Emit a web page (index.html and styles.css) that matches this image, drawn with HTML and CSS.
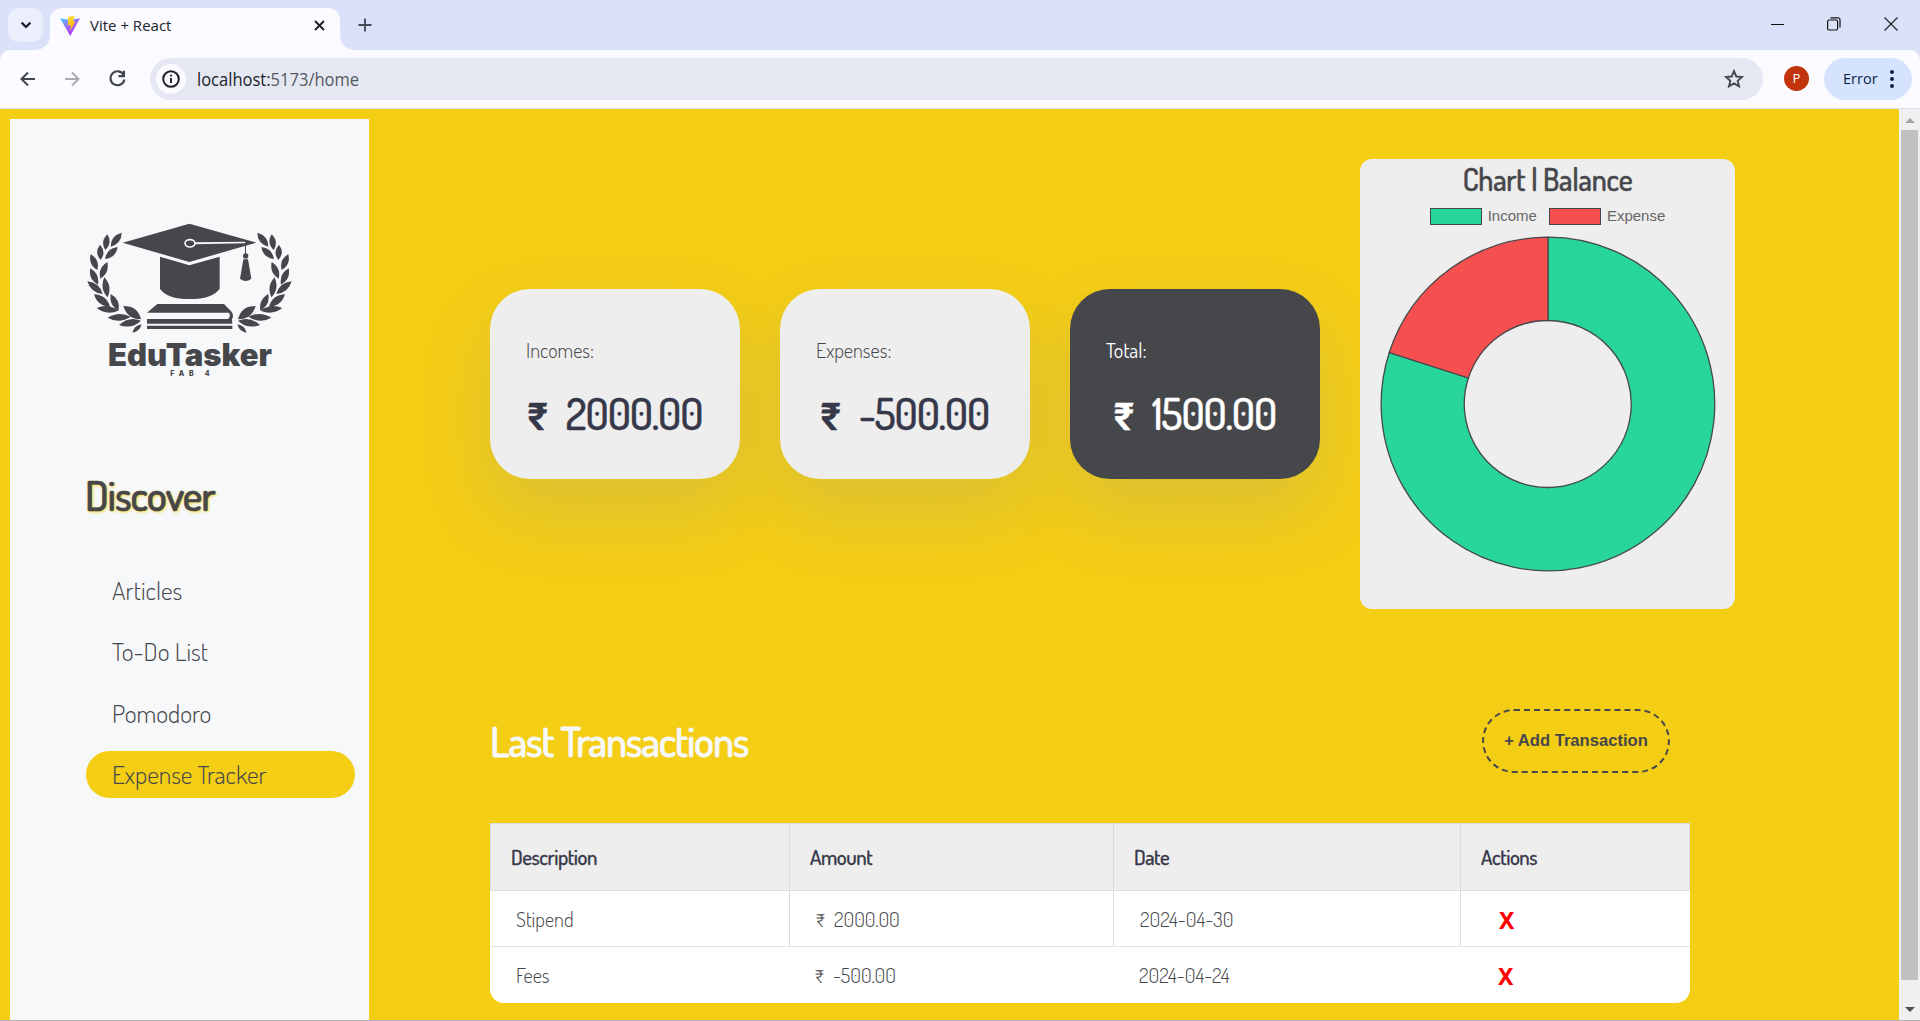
FILE: index.html
```html
<!DOCTYPE html>
<html lang="en">
<head>
<meta charset="utf-8">
<title>Vite + React</title>
<link rel="stylesheet" href="styles.css">
</head>
<body>
<div class="window">
  <header class="tabstrip">
    <div class="tab-search"><svg width="14" height="14" viewBox="0 0 14 14"><path d="M2.6 4.6 7 9l4.400-4.400" fill="none" stroke="#1b1f26" stroke-width="2.200"/></svg></div>
    <div class="tab">
      <svg class="vite" width="20" height="20" viewBox="0 0 20 20">
        <defs>
          <linearGradient id="vg" x1="0" y1="0" x2=".6" y2="1"><stop offset="0" stop-color="#41d1ff"/><stop offset=".5" stop-color="#9a6bf5"/><stop offset="1" stop-color="#bd34fe"/></linearGradient>
          <linearGradient id="vy" x1="0" y1="0" x2="0" y2="1"><stop offset="0" stop-color="#ffdd35"/><stop offset="1" stop-color="#ffa800"/></linearGradient>
        </defs>
        <path d="M0 2.200 10 4l10-1.800L10.300 20z" fill="url(#vg)"/><path d="M8.200.8 14.600 0l-1.500 5.200h2.300L10.500 14.800l.2-5.500H7.900z" fill="url(#vy)"/>
      </svg>
      <span class="tab-title">Vite + React</span>
      <svg class="tab-close" width="11" height="11" viewBox="0 0 11 11"><path d="M1 1l9 9M10 1l-9 9" stroke="#1b1f26" stroke-width="1.900"/></svg>
    </div>
    <svg class="plus" width="14" height="14" viewBox="0 0 14 14"><path d="M7 .5v13M.5 7h13" stroke="#454c58" stroke-width="1.900"/></svg>
    <div class="controls">
      <svg width="14" height="14" viewBox="0 0 14 14"><path d="M1 7.500h13" stroke="#111"/></svg>
      <svg width="14" height="14" viewBox="0 0 14 14" fill="none" stroke="#111" stroke-width="1.200"><rect x=".6" y="3" width="10" height="10" rx="1.500"/><path d="M3.500.8h7.500a2 2 0 0 1 2 2V10.500"/></svg>
      <svg width="14" height="14" viewBox="0 0 14 14"><path d="M.5.5l13 13M13.500.5l-13 13" stroke="#222" stroke-width="1.200"/></svg>
    </div>
  </header>
  <div class="toolbar">
    <svg class="nav-icon" width="16" height="16" viewBox="0 0 16 16" fill="none" stroke="#3f4652" stroke-width="2"><path d="M15 8H2M8 1.500 1.500 8 8 14.500"/></svg>
    <svg class="nav-icon" width="16" height="16" viewBox="0 0 16 16" fill="none" stroke="#a9abb1" stroke-width="2"><path d="M1 8h13M8 1.500 14.500 8 8 14.500"/></svg>
    <svg class="nav-icon" width="17" height="17" viewBox="0 0 17 17"><path d="M14.800 5.200A7 7 0 1 0 15.400 9.500" fill="none" stroke="#3f4652" stroke-width="2.100"/><path d="M16 .8v6.400H9.400V5.100h4.400V.8z" fill="#3f4652"/></svg>
    <div class="address">
      <span class="info"><svg width="18" height="18" viewBox="0 0 18 18"><circle cx="9" cy="9" r="7.800" fill="none" stroke="#1b1f26" stroke-width="2"/><path d="M9 8v5M9 4.800v1.800" stroke="#1b1f26" stroke-width="1.900"/></svg></span>
      <span class="url">localhost:<span class="path">5173/home</span></span>
      <svg class="star" width="20" height="20" viewBox="0 0 20 20"><path d="M10 2.200l2.300 5.300 5.800.5-4.400 3.800 1.300 5.600-5-3-5 3 1.300-5.600L1.900 8l5.800-.5z" fill="none" stroke="#43474e" stroke-width="1.900"/></svg>
    </div>
    <div class="avatar">P</div>
    <div class="error"><span>Error</span><svg width="4" height="18" viewBox="0 0 4 18" fill="#0a2342"><circle cx="2" cy="2" r="2"/><circle cx="2" cy="9" r="2"/><circle cx="2" cy="16" r="2"/></svg></div>
  </div>
  <div class="viewport">
    <div class="page">
      <aside class="sidebar">
        <svg class="logo" width="240" height="200" viewBox="0 0 720 600" fill="#46474b">
          <defs><g id="laurel">
            <path d="M155 98Q155 130 122 140Q122 107 155 98zM112 103Q128 128 106 150Q90 125 112 103zM143 141Q138 173 105 177Q110 145 143 141zM90 134Q110 156 92 180Q72 158 90 134zM62 163Q90 178 82 210Q54 194 62 163zM112 186Q119 219 91 236Q83 203 112 186zM61 205Q90 222 84 254Q54 238 61 205zM103 232Q128 258 113 292Q88 266 103 232z"/>
            <path d="M52 244Q88 247 98 282Q62 279 52 244zM72 283Q109 284 120 320Q83 319 72 283zM122 282Q152 298 146 332Q116 316 122 282zM80 324Q115 309 145 332Q110 347 80 324zM113 353Q147 332 182 350Q147 373 113 353zM160 318Q204 318 213 358Q172 358 160 318zM147 375Q177 347 213 362Q185 389 147 375zM187 398Q193 376 215 373Q209 395 187 398z"/>
          </g></defs>
          <use href="#laurel"/><use href="#laurel" transform="translate(717 0) scale(-1 1)"/>
          <path d="M158 128 358 71 559 128 358 186z"/>
          <path d="M270 170 358 196 449 170V266Q428 297 359 297T270 266z"/>
          <ellipse cx="360" cy="130" rx="15" ry="11" fill="none" stroke="#f6f8fa" stroke-width="5"/>
          <path d="M375 127 526 125.500V129.500L375 133z" fill="#f6f8fa"/>
          <path d="M525 128h3v36h-3z"/><circle cx="527" cy="168" r="8"/><path d="M520 178h14l10 58q-17 14-34 0z"/>
          <path d="M262 312H462L482 332Q494 345 486 358L487 371H231V357H474Q484 348 477 338H231zM231 377H487V387H231z"/>
          <text class="logo-name" x="114" y="497" textLength="492" lengthAdjust="spacingAndGlyphs">EduTasker</text>
          <text class="logo-sub" x="301" y="528" textLength="118">FAB 4</text>
        </svg>
        <h1 class="discover">Discover</h1>
        <nav class="menu">
          <a class="menu-item">Articles</a>
          <a class="menu-item">To-Do List</a>
          <a class="menu-item">Pomodoro</a>
          <a class="menu-item active">Expense Tracker</a>
        </nav>
      </aside>
      <main class="main">
        <section class="summary">
          <article class="card"><p class="label">Incomes:</p><p class="amount"><span class="rupee">₹</span><span>2000.00</span></p></article>
          <article class="card"><p class="label">Expenses:</p><p class="amount"><span class="rupee">₹</span><span>-500.00</span></p></article>
          <article class="card dark"><p class="label">Total:</p><p class="amount"><span class="rupee">₹</span><span>1500.00</span></p></article>
          <article class="chart">
            <h2>Chart | Balance</h2>
            <div class="legend"><i class="swatch"></i><span>Income</span><i class="swatch red"></i><span>Expense</span></div>
            <svg class="donut" width="336" height="336" viewBox="-168 -168 336 336" stroke="#46474b" stroke-width="1.300">
              <path d="M0-166.800A166.800 166.800 0 1 1-158.700-51.500L-79.600-26A83.500 83.500 0 1 0 0-83.500z" fill="#28d59a"/>
              <path d="M-158.700-51.500A166.800 166.800 0 0 1 0-166.800V-83.500A83.500 83.500 0 0 0-79.600-26z" fill="#f64f4f"/>
            </svg>
          </article>
        </section>
        <section class="transactions">
          <div class="section-head"><h2>Last Transactions</h2><button class="add">+ Add Transaction</button></div>
          <div class="table">
            <div class="row head"><div>Description</div><div>Amount</div><div>Date</div><div>Actions</div></div>
            <div class="row lined"><div>Stipend</div><div><span class="rupee">₹</span><span>2000.00</span></div><div>2024-04-30</div><div><b>X</b></div></div>
            <div class="row"><div>Fees</div><div><span class="rupee">₹</span><span>-500.00</span></div><div>2024-04-24</div><div><b>X</b></div></div>
          </div>
        </section>
      </main>
    </div>
    <div class="scrollbar"><i class="arrow up"></i><i class="thumb"></i><i class="arrow down"></i></div>
  </div>
</div>
</body>
</html>
```
FILE: styles.css
```css
* { box-sizing: border-box; }
html, body { margin: 0; height: 100%; overflow: hidden; }
h1, h2, p { margin: 0; }
body { font-family: "Dosis", Roboto, "Liberation Sans", sans-serif; font-weight: 300; color: #46474b; }
svg { flex: none; display: block; }
.window { height: 1021px; display: flex; flex-direction: column; background: #dae1f9; border-bottom: 1px solid #b3b3b3; }

.tabstrip { height: 50px; flex: none; display: flex; padding: 8px 22px 0 8px; }
.tab-search { width: 35px; height: 34px; border-radius: 11px; background: #ebeffc; display: flex; align-items: center; justify-content: center; }
.tab { position: relative; width: 290px; height: 42px; margin-left: 7px; padding: 0 15px 7px 10px; background: #fafaff; border-radius: 12px 12px 0 0; display: flex; align-items: center; font: 400 15px "Open Sans", sans-serif; color: #202329; }
.tab::before, .tab::after { content: ""; position: absolute; bottom: 0; width: 14px; height: 14px; }
.tab::before { left: -14px; background: radial-gradient(circle at 0 0, transparent 13.5px, #fafaff 14px); }
.tab::after { right: -14px; background: radial-gradient(circle at 100% 0, transparent 13.5px, #fafaff 14px); }
.tab-title { margin: -2px 0 0 10px; }
.tab-close { margin-left: auto; }
.plus { margin: 10px 0 0 18px; }
.controls { margin: 9px 0 0 auto; display: flex; gap: 43px; }

.toolbar { height: 59px; flex: none; display: flex; align-items: center; padding: 1px 8px 2px 0; background: #fafaff; border-bottom: 1px solid #dfe1ea; border-radius: 10px 10px 0 0; }
.nav-icon { margin-left: 20px; }
.nav-icon + .nav-icon { margin-left: 28px; }
.nav-icon + .nav-icon + .nav-icon { margin-left: 29px; }
.address { width: 1613px; height: 42px; margin-left: 24px; padding: 0 19px 0 6px; border-radius: 21px; background: #e5e8f3; display: flex; align-items: center; }
.info { width: 30px; height: 30px; border-radius: 15px; background: #fafaff; display: flex; align-items: center; justify-content: center; }
.url { margin-left: 11px; font: 400 19px "Open Sans", sans-serif; color: #202329; transform: scaleX(.87); transform-origin: left; }
.path { color: #555860; }
.star { margin-left: auto; }
.avatar { width: 25px; height: 25px; margin-left: 21px; border-radius: 50%; background: #c2340c; color: #fff; font: 400 13px/25px "Open Sans", sans-serif; text-align: center; }
.error { width: 88px; height: 42px; margin-left: 15px; padding: 0 18px 0 19px; border-radius: 21px; background: #d5e3ff; color: #0a2342; display: flex; align-items: center; justify-content: space-between; font: 400 14.5px "Open Sans", sans-serif; }

.viewport { flex: 1; min-height: 0; display: flex; background: #f4cd15; }
.page { flex: 1; display: flex; padding: 10px 0 0 10px; min-width: 0; }
.sidebar { width: 359px; flex: none; background: #f6f8fa; }
.logo { margin: 81px 0 0 60px; }
.logo-name { font: 900 92px Inter, sans-serif; }
.logo-sub { font: 800 21px Inter, sans-serif; }
.discover { height: 50px; margin: 70px 0 0 75px; font-size: 42px; line-height: 50px; font-weight: 500; letter-spacing: -1.05px; -webkit-text-stroke: .7px; text-shadow: 1px 1px 3px #f4cd15; }
.menu { margin: 47px 14px 0 76px; display: grid; gap: 14.4px; }
.menu-item { height: 47px; padding-left: 26px; border-radius: 24px; font-size: 25.6px; line-height: 47px; }
.menu-item.active { background: #f4cd15; }

.main { flex: 1; padding: 40px 0 0 121px; min-width: 0; }
.summary { display: flex; align-items: center; gap: 40px; }
.card { width: 250px; height: 190px; flex: none; padding: 47px 36px 0; border-radius: 40px; background: #eee; box-shadow: 0 34px 70px rgba(112, 140, 190, .18); }
.label { height: 28px; font-size: 20.3px; line-height: 28px; }
.amount { height: 60px; margin-top: 20px; display: flex; align-items: baseline; justify-content: center; color: #363849; font-size: 43px; line-height: 58px; font-weight: 500; letter-spacing: -1px; font-variant-numeric: slashed-zero; -webkit-text-stroke: .4px; }
.amount .rupee { width: 38px; flex: none; font-size: 38px; font-weight: 600; }
.card.dark { background: #46474b; color: #fff; }
.card.dark .label { font-weight: 400; }
.card.dark .amount { color: #fff; }
.chart { width: 375px; height: 450px; border-radius: 12px; background: #eee; display: flex; flex-direction: column; align-items: center; }
.chart h2 { height: 42px; font-size: 30px; line-height: 40px; font-weight: 500; letter-spacing: -.25px; -webkit-text-stroke: .5px; }
.legend { height: 31px; display: flex; align-items: center; font: 400 15px/29px "Liberation Sans", Arial, sans-serif; color: #666; }
.legend span { height: 31px; }
.swatch { width: 52px; height: 17px; margin-right: 6px; background: #28d59a; border: 1.5px solid #46474b; }
.swatch.red { margin-left: 12px; background: #f64f4f; }
.donut { margin-top: 4px; }

.section-head { width: 1180px; height: 64px; margin-top: 100px; display: flex; align-items: center; justify-content: space-between; }
.section-head h2 { font-size: 42px; line-height: 64px; font-weight: 500; letter-spacing: -1.2px; -webkit-text-stroke: .8px; color: #f6f8fa; }
.add { width: 188px; height: 64px; padding: 0; border: 2px dashed #46474b; border-radius: 32px; background: none; color: #46474b; font: 700 16.6px "Liberation Sans", Arial, sans-serif; }
.table { width: 1200px; margin-top: 50px; border-radius: 0 0 14px 14px; background: #fff; overflow: hidden; }
.row { height: 56px; display: grid; grid-template-columns: 299px 324px 347px 230px; font-size: 20.3px; line-height: 57px; font-variant-numeric: slashed-zero; }
.row > div { display: flex; align-items: baseline; padding-left: 26px; overflow: hidden; }
.row .rupee { width: 18px; font-size: 18px; }
.row b { margin-left: 12px; color: #f00; font: 700 23px/58px "Noto Sans", sans-serif; }
.row.head { height: 68px; line-height: 67px; background: #eee; color: #363849; font-size: 20.8px; font-weight: 500; letter-spacing: -.45px; -webkit-text-stroke: .3px; border: 1px solid #dcdcdc; grid-template-columns: 298px 324px 347px 229px; }
.row.head > div { padding-left: 20px; }
.row.head > div + div, .row.lined > div + div { border-left: 1px solid #dcdcdc; }
.row.lined { border-bottom: 1px solid #e0e0f0; grid-template-rows: 55px; }

.scrollbar { width: 21px; flex: none; background: #f0f0f0; display: flex; flex-direction: column; align-items: center; }
.thumb { width: 17px; height: 850px; margin-top: 7px; background: #c1c1c1; }
.arrow { width: 0; height: 0; border: 5px solid transparent; }
.up { margin-top: 4px; border-bottom-color: #a3a3a3; }
.down { margin-top: 27px; border-top-color: #505050; }
```
